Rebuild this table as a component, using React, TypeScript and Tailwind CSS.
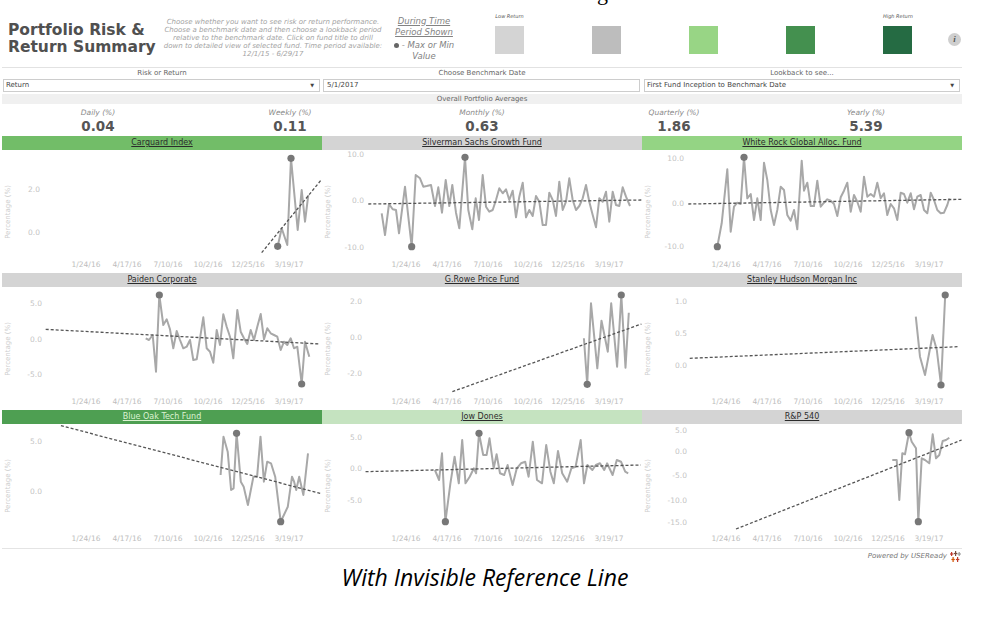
import React from "react";

type P = [number, number];
type ChartDef = {
  title: string;
  headerCls: string;
  titleCls: string;
  sx: number;
  ox: number;
  sy: number;
  oy: number;
  ticks: [string, number][];
  tickRight: number;
  pts: P[];
  trend: [P, P];
};

const charts: ChartDef[] = [
  {
    title: "Carguard Index",
    headerCls: "bg-[#72bd68]",
    titleCls: "text-[#2b2b2b]",
    sx: 3, ox: -2, sy: 3, oy: -20,
    ticks: [["2.0", 180], ["0.0", 310]],
    tickRight: 38,
    pts: [[833, 349], [845, 295], [862, 345], [873, 85], [893, 300], [905, 180], [915, 275], [925, 195]],
    trend: [[785, 368], [965, 148]],
  },
  {
    title: "Silverman Sachs Growth Fund",
    headerCls: "bg-[#d4d4d4]",
    titleCls: "text-[#2b2b2b]",
    sx: 3, ox: -2, sy: 3, oy: -20,
    ticks: [["10.0", 75], ["0.0", 212], ["-10.0", 355]],
    tickRight: 42,
    pts: [[185,250],[195,315],[207,222],[218,238],[228,240],[237,310],[246,240],[255,170],[265,260],[275,350],[287,135],[300,145],[310,170],[320,168],[333,165],[345,228],[355,172],[366,248],[377,150],[388,228],[397,165],[408,248],[418,295],[435,82],[445,240],[457,298],[467,205],[477,270],[488,135],[498,230],[508,245],[518,240],[528,210],[538,175],[548,190],[558,178],[568,210],[578,182],[588,262],[598,200],[608,158],[618,262],[628,240],[638,258],[648,198],[658,215],[668,285],[678,285],[688,188],[698,210],[708,258],[718,155],[728,240],[738,215],[748,145],[758,210],[768,240],[778,228],[788,205],[798,165],[808,215],[818,255],[828,292],[838,205],[848,215],[858,185],[868,275],[878,185],[888,225],[898,228],[908,172],[918,200],[930,228]],
    trend: [[145, 222], [965, 210]],
  },
  {
    title: "White Rock Global Alloc. Fund",
    headerCls: "bg-[#94d484]",
    titleCls: "text-[#2b2b2b]",
    sx: 3, ox: -2, sy: 3, oy: -20,
    ticks: [["10.0", 88], ["0.0", 222], ["-10.0", 352]],
    tickRight: 42,
    pts: [[232,350],[245,280],[262,118],[272,305],[282,230],[292,218],[302,222],[312,82],[322,205],[332,192],[342,270],[352,205],[362,270],[372,98],[382,150],[392,240],[402,285],[412,240],[422,170],[432,180],[442,255],[452,272],[462,240],[472,298],[485,92],[492,182],[502,158],[512,228],[522,228],[532,152],[542,230],[552,218],[562,208],[572,212],[582,222],[592,258],[602,202],[612,182],[622,158],[632,245],[642,195],[652,215],[662,245],[672,140],[682,200],[692,192],[702,200],[712,158],[722,205],[732,190],[742,255],[752,222],[762,235],[772,270],[782,188],[792,192],[802,218],[812,190],[822,238],[832,200],[842,195],[852,240],[862,250],[872,188],[882,210],[892,240],[902,250],[912,248],[922,225],[928,205]],
    trend: [[145, 222], [965, 208]],
  },
  {
    title: "Paiden Corporate",
    headerCls: "bg-[#d4d4d4]",
    titleCls: "text-[#2b2b2b]",
    sx: 3, ox: -2, sy: 3, oy: -17,
    ticks: [["5.0", 103], ["0.0", 210], ["-5.0", 315]],
    tickRight: 40,
    pts: [[437,205],[447,210],[458,195],[468,305],[478,75],[490,165],[500,148],[510,178],[520,235],[530,183],[540,210],[550,235],[560,230],[570,210],[580,270],[590,268],[600,205],[610,142],[620,235],[630,245],[640,278],[650,180],[660,225],[670,133],[680,170],[690,200],[700,265],[712,120],[722,185],[732,205],[742,222],[752,180],[762,210],[772,170],[782,132],[792,208],[802,175],[812,190],[822,195],[832,200],[842,240],[852,215],[862,225],[872,205],[882,235],[892,230],[905,342],[915,215],[928,260]],
    trend: [[137, 178], [960, 222]],
  },
  {
    title: "G.Rowe Price Fund",
    headerCls: "bg-[#d4d4d4]",
    titleCls: "text-[#2b2b2b]",
    sx: 2.38, ox: -2, sy: 3, oy: -17,
    ticks: [["2.0", 95], ["0.0", 205], ["-2.0", 313]],
    tickRight: 40,
    pts: [[628,205],[636,343],[645,100],[660,295],[670,152],[685,245],[693,100],[707,290],[717,75],[727,293],[735,128]],
    trend: [[315, 365], [765, 162]],
  },
  {
    title: "Stanley Hudson Morgan Inc",
    headerCls: "bg-[#d4d4d4]",
    titleCls: "text-[#2b2b2b]",
    sx: 2.38, ox: -322, sy: 3, oy: -17,
    ticks: [["1.0", 95], ["0.5", 192], ["0.0", 288]],
    tickRight: 45,
    pts: [[1418,140],[1428,260],[1440,315],[1458,195],[1468,240],[1478,345],[1488,75]],
    trend: [[880, 265], [1520, 230]],
  },
  {
    title: "Blue Oak Tech Fund",
    headerCls: "bg-[#4e9f52]",
    titleCls: "text-[#dcf2d2]",
    sx: 2.38, ox: -2, sy: 3, oy: -19,
    ticks: [["5.0", 110], ["0.0", 262]],
    tickRight: 40,
    pts: [[525,210],[532,95],[542,140],[550,255],[556,250],[563,85],[573,230],[580,245],[590,300],[603,215],[612,215],[620,95],[628,230],[636,170],[645,175],[655,215],[668,350],[685,305],[695,215],[700,230],[705,255],[712,215],[722,270],[733,145]],
    trend: [[145, 62], [762, 265]],
  },
  {
    title: "Jow Dones",
    headerCls: "bg-[#c5e3c0]",
    titleCls: "text-[#2b2b2b]",
    sx: 2.38, ox: -322, sy: 3, oy: -19,
    ticks: [["5.0", 100], ["0.0", 193], ["-5.0", 287]],
    tickRight: 40,
    pts: [[1035,195],[1045,225],[1052,145],[1060,350],[1072,235],[1082,155],[1092,235],[1100,105],[1108,235],[1118,215],[1128,190],[1133,205],[1140,85],[1150,150],[1158,150],[1165,100],[1175,190],[1182,148],[1190,205],[1200,210],[1208,180],[1220,240],[1230,190],[1240,175],[1250,170],[1258,215],[1268,110],[1278,225],[1290,235],[1300,120],[1310,200],[1318,235],[1328,138],[1338,205],[1350,230],[1360,190],[1370,185],[1382,105],[1390,235],[1398,180],[1410,195],[1418,180],[1428,175],[1438,195],[1445,175],[1458,210],[1468,165],[1478,170],[1488,200],[1495,205]],
    trend: [[870, 200], [1525, 180]],
  },
  {
    title: "R&P 540",
    headerCls: "bg-[#d4d4d4]",
    titleCls: "text-[#2b2b2b]",
    sx: 3, ox: -2, sy: 3, oy: -19,
    ticks: [["5.0", 78], ["0.0", 140], ["-5.0", 213], ["-10.0", 288], ["-15.0", 355]],
    tickRight: 45,
    pts: [[757,165],[770,165],[778,285],[787,145],[795,148],[807,83],[815,110],[828,130],[835,350],[845,160],[855,165],[868,175],[878,88],[888,160],[898,150],[908,108],[918,105],[928,98]],
    trend: [[288, 372], [965, 105]],
  },
];

const xLabels: [string, number][] = [
  ["1/24/16", 84],
  ["4/17/16", 125],
  ["7/10/16", 166],
  ["10/2/16", 206],
  ["12/25/16", 246],
  ["3/19/17", 287],
];

const FONT = "DejaVu Sans, Verdana, sans-serif";

function Chart({ c }: { c: ChartDef }) {
  const tx = (x: number) => x / c.sx + c.ox;
  const ty = (y: number) => y / c.sy + c.oy;
  const pts = c.pts.map(([x, y]) => [tx(x), ty(y)] as P);
  let hi = 0;
  let lo = 0;
  pts.forEach((p, i) => {
    if (p[1] < pts[hi][1]) hi = i;
    if (p[1] > pts[lo][1]) lo = i;
  });
  const d = pts.map((p, i) => `${i ? "L" : "M"}${p[0].toFixed(1)},${p[1].toFixed(1)}`).join(" ");
  const [t0, t1] = c.trend;
  return (
    <div className="flex flex-col">
      <div className={`h-[14px] text-center text-[8px] leading-[14px] underline ${c.headerCls} ${c.titleCls}`}>{c.title}</div>
      <svg width={320} height={123} className="block overflow-visible">
        <text
          x={6}
          y={62}
          transform="rotate(-90 6 62)"
          textAnchor="middle"
          dominantBaseline="middle"
          fontSize={7}
          fill="#cdcdcd"
          fontFamily={FONT}
        >
          Percentage (%)
        </text>
        {c.ticks.map(([l, y]) => (
          <text
            key={l}
            x={c.tickRight}
            y={ty(y)}
            textAnchor="end"
            dominantBaseline="middle"
            fontSize={7.5}
            fill="#c4c4c4"
            fontFamily={FONT}
          >
            {l}
          </text>
        ))}
        {xLabels.map(([l, x]) => (
          <text
            key={l}
            x={x}
            y={115}
            textAnchor="middle"
            dominantBaseline="middle"
            fontSize={7.5}
            fill="#bdbdbd"
            fontFamily={FONT}
          >
            {l}
          </text>
        ))}
        <path d={d} fill="none" stroke="#a8a8a8" strokeWidth={2} strokeLinejoin="round" />
        <line
          x1={tx(t0[0])}
          y1={ty(t0[1])}
          x2={tx(t1[0])}
          y2={ty(t1[1])}
          stroke="#555"
          strokeWidth={1.3}
          strokeDasharray="3 2"
        />
        <circle cx={pts[hi][0]} cy={pts[hi][1]} r={3.6} fill="#777" />
        <circle cx={pts[lo][0]} cy={pts[lo][1]} r={3.6} fill="#777" />
      </svg>
    </div>
  );
}

const legend = [
  { cls: "bg-[#d4d4d4]", label: "Low Return", w: "w-[97px]" },
  { cls: "bg-[#bdbdbd]", label: "", w: "w-[97px]" },
  { cls: "bg-[#98d585]", label: "", w: "w-[97px]" },
  { cls: "bg-[#44904f]", label: "", w: "w-[97px]" },
  { cls: "bg-[#256b43]", label: "High Return", w: "w-[29px]" },
];

const averages: [string, string][] = [
  ["Daily (%)", "0.04"],
  ["Weekly (%)", "0.11"],
  ["Monthly (%)", "0.63"],
  ["Quarterly (%)", "1.86"],
  ["Yearly (%)", "5.39"],
];

export default function App() {
  return (
    <div className="relative h-[621px] w-[987px] overflow-hidden bg-white font-['DejaVu_Sans',sans-serif]">
      <span className="absolute left-[597px] top-[-18px] font-['Liberation_Serif',serif] text-[22px] leading-[22px] text-black">
        g
      </span>
      <div className="ml-[2px] w-[960px]">
        {/* Header */}
        <div className="flex h-[67px] items-start">
          <div className="ml-[6px] mt-[22px] w-[154px] shrink-0 text-[15.5px] font-bold leading-[17px] text-[#505050]">
            Portfolio Risk &amp;
            <br />
            Return Summary
          </div>
          <div className="mt-[18px] w-[222px] shrink-0 text-center text-[7px] italic leading-[8.1px] text-[#a3a3a3] whitespace-nowrap">
            <div>Choose whether you want to see risk or return performance.</div>
            <div>Choose a benchmark date and then choose a lookback period</div>
            <div>relative to the benchmark date. Click on fund title to drill</div>
            <div>down to detailed view of selected fund. Time period available:</div>
            <div>12/1/15 - 6/29/17</div>
          </div>
          <div className="mt-[15.5px] w-[80px] shrink-0 text-center text-[8.5px] italic leading-[11px] text-[#828282]">
            <div className="underline">During Time</div>
            <div className="underline">Period Shown</div>
            <div className="mt-[2px] whitespace-nowrap">
              <span className="mr-[3px] inline-block h-[5px] w-[5px] rounded-full bg-[#666] align-middle" />- Max or Min
            </div>
            <div>Value</div>
          </div>
          <div className="ml-[31px] mt-[13px] flex shrink-0">
            {legend.map((l, i) => (
              <div key={i} className={l.w}>
                <div className="h-[6px] w-[29px] whitespace-nowrap text-center text-[5px] italic leading-[6px] text-[#555]">
                  {l.label}
                </div>
                <div className={`mt-[7px] h-[28px] w-[29px] ${l.cls}`} />
              </div>
            ))}
          </div>
          <div className="ml-[36px] mt-[33px] flex h-[13px] w-[13px] shrink-0 items-center justify-center rounded-full bg-[#cfcfcf] font-['Liberation_Serif',serif] text-[9px] font-bold italic text-[#555]">
            i
          </div>
        </div>
        <div className="h-px bg-[#e2e2e2]" />
        {/* Controls */}
        <div className="grid h-[11px] grid-cols-3 text-center text-[7px] leading-[11px] text-[#666]">
          <div>Risk or Return</div>
          <div>Choose Benchmark Date</div>
          <div>Lookback to see...</div>
        </div>
        <div className="flex h-[13px] text-[7px] text-[#444]">
          <div className="ml-[1px] flex w-[317px] items-center justify-between border border-[#cdcdcd] px-[2px]">
            <span>Return</span>
            <span className="mr-[3px] text-[5px]">▼</span>
          </div>
          <div className="ml-[3px] flex w-[317px] items-center border border-[#cdcdcd] px-[3px]">
            <span>5/1/2017</span>
          </div>
          <div className="ml-[4px] flex w-[316px] items-center justify-between border border-[#cdcdcd] px-[2px]">
            <span>First Fund Inception to Benchmark Date</span>
            <span className="mr-[3px] text-[5px]">▼</span>
          </div>
        </div>
        <div className="mt-[2px] h-[10px] bg-[#f0f0f0] text-center text-[7px] leading-[10px] text-[#666]">
          Overall Portfolio Averages
        </div>
        {/* Averages */}
        <div className="grid h-[32px] grid-cols-5">
          {averages.map(([l, v]) => (
            <div key={l} className="flex flex-col items-center">
              <div className="mt-[4px] text-[7.5px] italic leading-[9px] text-[#8a8a8a]">{l}</div>
              <div className="mt-[2px] text-[13.5px] font-bold leading-[14px] text-[#555]">{v}</div>
            </div>
          ))}
        </div>
        {/* Charts */}
        <div className="grid grid-cols-[320px_320px_320px]">
          {charts.map((c) => (
            <Chart key={c.title} c={c} />
          ))}
        </div>
        <div className="mt-[1px] h-px bg-[#e4e4e4]" />
        <div className="flex h-[14px] items-center justify-end pr-[1px] text-[7px] italic text-[#777]">
          <span>Powered by USEReady</span>
          <svg width={11} height={11} viewBox="0 0 11 11" className="ml-[3px]">
            <rect x={1} y={1} width={1.2} height={4} fill="#c0392b" />
            <rect x={0} y={2.4} width={3.4} height={1.2} fill="#c0392b" />
            <rect x={5} y={0} width={1.2} height={5} fill="#7a4a3a" />
            <rect x={3.9} y={1.9} width={3.4} height={1.2} fill="#7a4a3a" />
            <rect x={8.6} y={1} width={1.2} height={4} fill="#999" />
            <rect x={7.5} y={2.4} width={3.4} height={1.2} fill="#999" />
            <rect x={2.5} y={6} width={1.2} height={5} fill="#d35400" />
            <rect x={1.4} y={7.9} width={3.4} height={1.2} fill="#d35400" />
            <rect x={7} y={6} width={1.2} height={5} fill="#c0392b" />
            <rect x={5.9} y={7.9} width={3.4} height={1.2} fill="#c0392b" />
          </svg>
        </div>
        <div className="mt-[1px] pl-[6px] text-center font-['Open_Sans',sans-serif] text-[23px] italic leading-[26px] text-black">
          With Invisible Reference Line
        </div>
      </div>
    </div>
  );
}
